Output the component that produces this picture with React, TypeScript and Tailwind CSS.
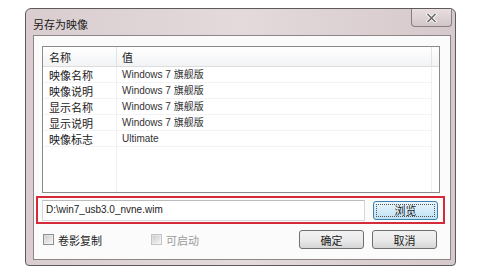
import React from 'react';

const rows: [string, string][] = [
    ['映像名称', 'Windows 7 旗舰版'],
    ['映像说明', 'Windows 7 旗舰版'],
    ['显示名称', 'Windows 7 旗舰版'],
    ['显示说明', 'Windows 7 旗舰版'],
    ['映像标志', 'Ultimate'],
];

const cjk = "font-['Microsoft_YaHei','Noto_Sans_CJK_SC',sans-serif]";
const latin = "font-['Liberation_Sans','Noto_Sans_CJK_SC',sans-serif]";

const Checkbox: React.FC<{ label: string; disabled?: boolean }> = ({ label, disabled }) => (
    <div className="flex items-center gap-[4px]">
        <div className={`w-[11px] h-[11px] border ${disabled ? 'border-[#c4c4c4]' : 'border-[#8e8f8f]'} bg-gradient-to-br from-[#dcdcdc] to-[#f6f6f6] p-[1px]`}>
            <div className="w-full h-full bg-gradient-to-br from-[#cfcfcf] to-[#f2f2f2]" />
        </div>
        <span className={`text-[11px] leading-[14px] ${disabled ? 'text-[#9a9a9a]' : 'text-[#222]'}`}>{label}</span>
    </div>
);

const Button: React.FC<{ label: string; focused?: boolean }> = ({ label, focused }) => (
    <button
        className={`w-[65px] h-[19px] rounded-[3px] border text-[11px] leading-[14px] text-[#222] flex items-center justify-center ${
            focused
                ? 'border-[#3c7fb1] bg-gradient-to-b from-[#eaf6fd] to-[#bfe2f4] outline outline-1 outline-dotted outline-offset-[-4px] outline-[#555]'
                : 'border-[#707070] bg-gradient-to-b from-[#f2f2f2] via-[#ebebeb] to-[#d6d6d6]'
        }`}
    >
        {label}
    </button>
);

const App: React.FC = () => {
    return (
        <div className={`w-[482px] h-[280px] bg-white pt-[8px] pl-[25px] ${cjk}`}>
            <div className="w-[431px] h-[258px] rounded-t-[6px] rounded-b-[4px] border border-[#5e5a5b] bg-gradient-to-r from-[#d9cdcf] via-[#e4dadb] to-[#d6c9cb] flex flex-col pl-[7px] pr-[4px] pb-[5px]">
                {/* title bar */}
                <div className="h-[26px] flex items-start justify-between">
                    <span className="text-[11px] leading-[14px] text-[#1a1a1a] mt-[8px]">另存为映像</span>
                    <div className="w-[41px] h-[18px] mr-[-1px] rounded-b-[4px] border border-t-0 border-[#8a7e80] bg-gradient-to-b from-[#e8dfe0] to-[#d2c6c8] flex items-center justify-center">
                        <svg width="11" height="10" viewBox="0 0 11 10">
                            <path d="M2 1.5 L9 8.5 M9 1.5 L2 8.5" stroke="#fff" strokeWidth="3.2" strokeLinecap="square" />
                            <path d="M2 1.5 L9 8.5 M9 1.5 L2 8.5" stroke="#6f6f6f" strokeWidth="1.6" strokeLinecap="square" />
                        </svg>
                    </div>
                </div>
                {/* client */}
                <div className="flex-1 border border-[#8d8587] bg-[#fbfbfb] flex flex-col pt-[10px]">
                    {/* list view */}
                    <div className="ml-[8px] w-[398px] h-[147px] border border-[#8a8a8a] bg-white flex flex-col">
                        <div className="h-[20px] flex border-b border-[#dcdcdc] bg-gradient-to-b from-[#ffffff] to-[#f2f3f5] text-[11px] leading-[14px] text-[#1a1a1a]">
                            <div className="w-[74px] pl-[6px] flex items-center border-r border-[#e2e2e2]">名称</div>
                            <div className="w-[315px] pl-[5px] flex items-center border-r border-[#e2e2e2]">值</div>
                        </div>
                        <div className="flex-1 flex">
                            <div className="w-[74px] border-r border-[#f0f0f0]">
                                {rows.map(([k]) => (
                                    <div key={k} className="h-[16px] pl-[6px] flex items-center text-[11px] leading-[14px] text-[#1a1a1a] border-b border-[#f3f3f3]">
                                        {k}
                                    </div>
                                ))}
                            </div>
                            <div className="w-[315px] border-r border-[#f0f0f0]">
                                {rows.map(([k, v]) => (
                                    <div key={k} className={`h-[16px] pl-[5px] flex items-center text-[10px] leading-[14px] text-[#333] border-b border-[#f3f3f3] ${latin}`}>
                                        {v}
                                    </div>
                                ))}
                            </div>
                        </div>
                    </div>
                    {/* path row, highlighted */}
                    <div className="mt-[3px] ml-[2px] w-[409px] h-[28px] border-2 border-[#d42a3a] flex items-center pl-[4px] gap-[8px]">
                        <div className={`w-[323px] h-[21px] border border-[#d6d6d6] border-t-[#bcbcbc] bg-white flex items-center pl-[3px] text-[10px] leading-[14px] text-[#222] ${latin}`}>
                            D:\win7_usb3.0_nvne.wim
                        </div>
                        <Button label="浏览" focused />
                    </div>
                    {/* bottom row */}
                    <div className="mt-[6px] ml-[9px] flex items-center">
                        <Checkbox label="卷影复制" />
                        <div className="ml-[49px]">
                            <Checkbox label="可启动" disabled />
                        </div>
                        <div className="ml-auto mr-[13px] flex gap-[8px]">
                            <Button label="确定" />
                            <Button label="取消" />
                        </div>
                    </div>
                </div>
            </div>
        </div>
    );
};

export default App;
